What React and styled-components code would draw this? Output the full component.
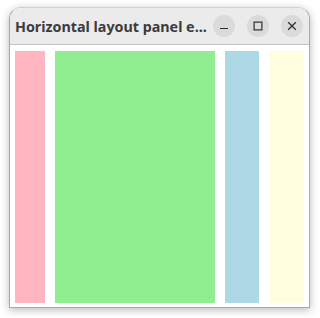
import React from 'react';
import styled, { createGlobalStyle } from 'styled-components';

const GlobalStyle = createGlobalStyle`
  html, body {
    margin: 0;
    padding: 0;
    background: #ffffff;
  }
`;

const panels = [
  { color: '#ffb6c1', width: 30 },
  { color: '#90ee90', width: 160 },
  { color: '#add8e6', width: 34 },
  { color: '#ffffe0', width: 35 },
];

export default function App() {
  return (
    <>
      <GlobalStyle />
      <Page>
        <Window>
          <TitleBar>
            <Title>Horizontal layout panel e...</Title>
            <Controls>
              <ControlButton aria-label="Minimize">
                <svg width="10" height="10" viewBox="0 0 10 10">
                  <path d="M1 7.5h8" stroke="#2e2e2e" strokeWidth="1.2" />
                </svg>
              </ControlButton>
              <ControlButton aria-label="Maximize">
                <svg width="10" height="10" viewBox="0 0 10 10">
                  <rect x="1.1" y="1.1" width="7.8" height="7.8" fill="none" stroke="#2e2e2e" strokeWidth="1.2" />
                </svg>
              </ControlButton>
              <ControlButton aria-label="Close">
                <svg width="10" height="10" viewBox="0 0 10 10">
                  <path d="M1.2 1.2l7.6 7.6M8.8 1.2l-7.6 7.6" stroke="#2e2e2e" strokeWidth="1.3" />
                </svg>
              </ControlButton>
            </Controls>
          </TitleBar>
          <Content>
            {panels.map((p) => (
              <Panel key={p.color} color={p.color} width={p.width} />
            ))}
          </Content>
        </Window>
      </Page>
    </>
  );
}

const Page = styled.div`
  width: 320px;
  height: 318px;
  box-sizing: border-box;
  padding: 7px 10px 10px 9px;
`;

const Window = styled.div`
  width: 301px;
  height: 301px;
  box-sizing: border-box;
  display: flex;
  flex-direction: column;
  background: #ffffff;
  border: 1px solid #a8a8a8;
  border-top-color: #d0d0d0;
  border-radius: 12px 12px 0 0;
  box-shadow: 0 2px 9px rgba(0, 0, 0, 0.28);
  overflow: hidden;
`;

const TitleBar = styled.div`
  height: 36px;
  flex-shrink: 0;
  display: flex;
  align-items: center;
  justify-content: space-between;
  padding: 0 6px 0 5px;
  background: #ebebeb;
  border-bottom: 1px solid #c4c4c4;
`;

const Title = styled.div`
  font-family: 'Noto Sans', 'DejaVu Sans', sans-serif;
  font-weight: 700;
  font-size: 14.3px;
  color: #3c3c3c;
  white-space: nowrap;
  padding-top: 1px;
`;

const Controls = styled.div`
  display: flex;
  gap: 12px;
`;

const ControlButton = styled.div`
  width: 22px;
  height: 22px;
  border-radius: 50%;
  background: #dadada;
  display: flex;
  align-items: center;
  justify-content: center;
`;

const Content = styled.div`
  flex: 1;
  display: flex;
  gap: 10px;
  padding: 6px 5px 4px 5px;
`;

const Panel = styled.div`
  width: ${(p) => p.width}px;
  background: ${(p) => p.color};
`;
